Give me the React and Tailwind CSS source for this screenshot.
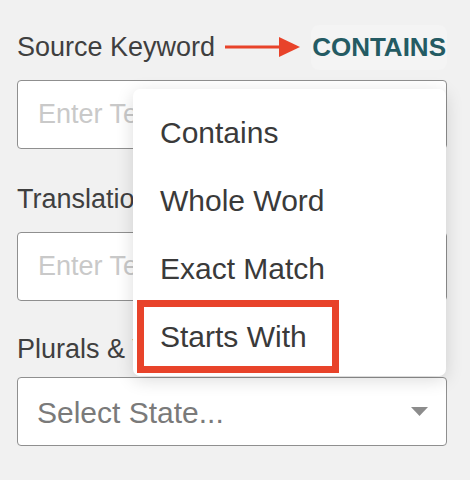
import React from "react"

const options = ["Contains", "Whole Word", "Exact Match", "Starts With"]

function Field({ label, children, className }) {
  return (
    <div className={className}>
      <div className="flex h-[46px] items-center text-[27px] leading-[27px] text-[#3f3f3f]">{label}</div>
      {children}
    </div>
  )
}

export default function App() {
  return (
    <div
      className="relative h-[480px] w-[470px] overflow-hidden bg-[#f1f1f1] pl-[17px] pt-[24px]"
      style={{ fontFamily: '"Liberation Sans", Arial, sans-serif' }}
    >
      <div className="w-[430px]">
        {/* source keyword */}
        <div className="flex h-[46px] items-center">
          <span className="text-[27px] leading-[27px] text-[#3f3f3f]">Source Keyword</span>
          <svg className="ml-[10px]" width="76" height="22" viewBox="0 0 76 22">
            <line x1="0" y1="11" x2="58" y2="11" stroke="#e8432a" strokeWidth="3" />
            <polygon points="54,1 75,11 54,21" fill="#e8432a" />
          </svg>
          <div className="ml-auto flex h-[45px] items-center rounded-lg bg-[#f4f4f4] px-[1px]">
            <span className="text-[26px] font-bold leading-[26px] text-[#245b63]">CONTAINS</span>
          </div>
        </div>
        <input
          className="mt-[10px] block h-[69px] w-full rounded-[4px] border-[1.5px] border-[#8f8f8f] bg-white pl-[20px] text-[27px] outline-none placeholder:text-[#c9c9c9]"
          placeholder="Enter Text..."
        />

        <Field label="Translation Keyword" className="mt-[27px]">
          <input
            className="mt-[10px] block h-[69px] w-full rounded-[4px] border-[1.5px] border-[#8f8f8f] bg-white pl-[20px] text-[27px] outline-none placeholder:text-[#c9c9c9]"
            placeholder="Enter Text..."
          />
        </Field>

        <Field label="Plurals & Variants" className="mt-[25px]">
          <div className="mt-[5px] flex h-[69px] w-full items-center justify-between rounded-[4px] border-[1.5px] border-[#8f8f8f] bg-white pl-[19px] pr-[18px]">
            <span className="pt-[3px] text-[30px] leading-[30px] text-[#7a7a7a]">Select State...</span>
            <svg width="17" height="9" viewBox="0 0 17 9">
              <polygon points="0,0 17,0 8.5,9" fill="#8c8c8c" />
            </svg>
          </div>
        </Field>
      </div>

      {/* dropdown menu */}
      <div className="absolute left-[133px] top-[89px] w-[313px] rounded-[7px] bg-white pb-[5px] pt-[10px] shadow-[0_4px_18px_rgba(0,0,0,0.14)]">
        {options.map((opt) => (
          <div key={opt} className="flex h-[68px] items-center pl-[27px] text-[30px] leading-[30px] text-[#3a3a3a]">
            {opt}
          </div>
        ))}
        <div className="absolute left-[4px] top-[211px] h-[73px] w-[202px] border-[7px] border-[#e8432a]" />
      </div>
    </div>
  )
}
